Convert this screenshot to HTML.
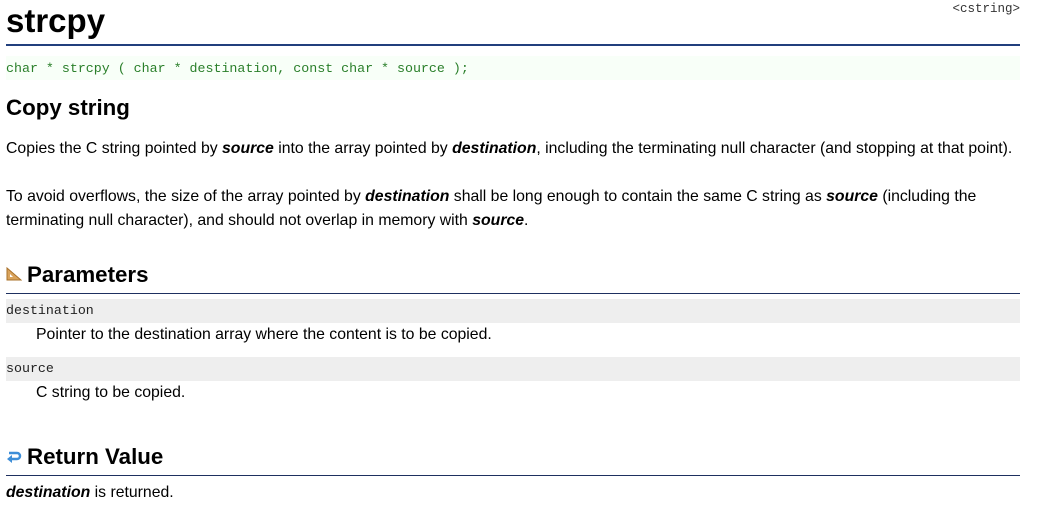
<!DOCTYPE html>
<html><head><style>
body{margin:0;width:1046px;height:509px;background:#fff;font-family:"Liberation Sans",sans-serif;color:#000;position:relative;overflow:hidden}
.a{position:absolute;white-space:nowrap}
.p{font-size:15.8px;line-height:24px;left:6px}
.m{font-family:"Liberation Mono",monospace}
.h{font-weight:bold;font-size:22.3px;left:6px}
.ln{position:absolute;left:6px;width:1014px;height:1px;background:#1e3060}
.bar{position:absolute;left:6px;width:1014px;height:24px;background:#eeeeee}
b i,i b{font-weight:bold;font-style:italic}
</style></head><body>
<div class="a" style="left:6px;top:0;font-size:33px;font-weight:bold;line-height:42px">strcpy</div>
<div class="a m" style="right:26px;top:2px;font-size:12.5px;color:#333">&lt;cstring&gt;</div>
<div class="ln" style="top:44px;height:2px;background:#213f7d"></div>
<div style="position:absolute;left:6px;top:56px;width:1014px;height:24px;background:#f8fff8"></div>
<div class="a m" style="left:6px;top:61px;font-size:13.3px;color:#2a7f2a">char * strcpy ( char * destination, const char * source );</div>
<div class="a h" style="top:95px">Copy string</div>
<div class="a p" style="top:137px">Copies the C string pointed by <b><i>source</i></b> into the array pointed by <b><i>destination</i></b>, including the terminating null character (and stopping at that point).</div>
<div class="a p" style="top:185px">To avoid overflows, the size of the array pointed by <b><i>destination</i></b> shall be long enough to contain the same C string as <b><i>source</i></b> (including the</div>
<div class="a p" style="top:209px">terminating null character), and should not overlap in memory with <b><i>source</i></b>.</div>
<svg style="position:absolute;left:6px;top:267px" width="16" height="14" viewBox="0 0 16 14"><path d="M1 13V1L15 13Z" fill="#d9a35c" stroke="#a8702a"/><path d="M4 10V7L7 10Z" fill="#fff"/></svg>
<div class="a h" style="left:27px;top:262px">Parameters</div>
<div class="ln" style="top:293px"></div>
<div class="bar" style="top:299px"></div>
<div class="a m" style="left:6px;top:303px;font-size:13.3px;color:#222">destination</div>
<div class="a p" style="left:36px;top:323px">Pointer to the destination array where the content is to be copied.</div>
<div class="bar" style="top:357px"></div>
<div class="a m" style="left:6px;top:361px;font-size:13.3px;color:#222">source</div>
<div class="a p" style="left:36px;top:381px">C string to be copied.</div>
<svg style="position:absolute;left:6px;top:450px" width="16" height="14" viewBox="0 0 16 14"><path d="M3 3H11A3 3 0 0 1 11 9H4" fill="none" stroke="#3d8ed8" stroke-width="2.5"/><path d="M1 9L6 5V13Z" fill="#3d8ed8"/></svg>
<div class="a h" style="left:27px;top:444px">Return Value</div>
<div class="ln" style="top:475px"></div>
<div class="a p" style="top:481px"><b><i>destination</i></b> is returned.</div>
</body></html>
